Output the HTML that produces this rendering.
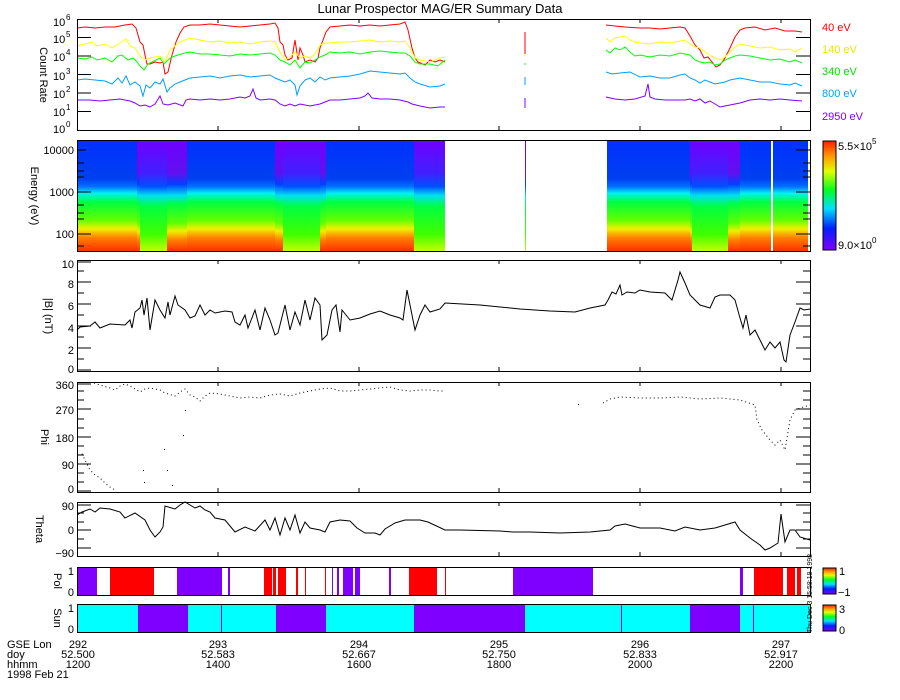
<!DOCTYPE html>
<html><head><meta charset="utf-8"><style>
html,body{margin:0;padding:0;background:#fff;}
svg{display:block;}
text{font-family:"Liberation Sans",sans-serif;font-size:11px;fill:#000;}
</style></head><body>
<svg width="900" height="700" viewBox="0 0 900 700" xmlns="http://www.w3.org/2000/svg">
<defs>
<linearGradient id="cb" x1="0" y1="1" x2="0" y2="0">
<stop offset="0" stop-color="#8000ff"/><stop offset="0.2" stop-color="#0020ff"/><stop offset="0.38" stop-color="#00e0ff"/><stop offset="0.55" stop-color="#00ff20"/><stop offset="0.72" stop-color="#e0ff00"/><stop offset="0.85" stop-color="#ffa000"/><stop offset="1" stop-color="#ff2000"/>
</linearGradient>
<linearGradient id="gN" x1="0" y1="0" x2="0" y2="1">
<stop offset="0" stop-color="#0030ff"/><stop offset="0.35" stop-color="#0040f0"/><stop offset="0.42" stop-color="#0070ff"/><stop offset="0.48" stop-color="#00f0f0"/><stop offset="0.56" stop-color="#00ff40"/><stop offset="0.72" stop-color="#60ff00"/><stop offset="0.8" stop-color="#f0f000"/><stop offset="0.88" stop-color="#ff8000"/><stop offset="1" stop-color="#ff3000"/>
</linearGradient>
<linearGradient id="gP" x1="0" y1="0" x2="0" y2="1">
<stop offset="0" stop-color="#7000ff"/><stop offset="0.3" stop-color="#6010f0"/><stop offset="0.4" stop-color="#0040ff"/><stop offset="0.5" stop-color="#00e0f0"/><stop offset="0.58" stop-color="#00ff40"/><stop offset="0.75" stop-color="#60ff00"/><stop offset="0.82" stop-color="#f0f000"/><stop offset="0.9" stop-color="#ff8000"/><stop offset="1" stop-color="#ff3000"/>
</linearGradient>
<linearGradient id="gL" x1="0" y1="0" x2="0" y2="1">
<stop offset="0" stop-color="#7000ff"/><stop offset="0.3" stop-color="#4020ff"/><stop offset="0.42" stop-color="#0050ff"/><stop offset="0.5" stop-color="#00e0f0"/><stop offset="0.6" stop-color="#00ff40"/><stop offset="0.85" stop-color="#40ff00"/><stop offset="1" stop-color="#c0ff00"/>
</linearGradient>
</defs>

<text x="440" y="13" text-anchor="middle" style="font-size:13px">Lunar Prospector MAG/ER Summary Data</text>

<!-- Panel 1: count rate -->
<g fill="none" stroke-width="1">
<polyline stroke="#ff0000" points="77,28 85,27 95,28 105,27 115,27 125,25 132,24 136,28 140,42 143,45 145,55 147,64 150,64 155,62 160,63 163,62 165,74 168,72 172,55 176,42 180,33 184,27 190,25 200,25 210,24 220,25 230,26 240,27 250,26 260,25 270,24 275,23 278,28 280,42 283,45 285,55 288,60 292,58 295,40 298,60 300,48 303,55 305,62 310,60 315,62 318,58 320,48 323,40 326,32 330,27 340,26 350,25 360,26 370,25 380,26 390,25 400,24 405,22 408,30 412,48 415,58 418,62 425,65 430,60 435,62 440,60 445,62"/>
<polyline stroke="#ffff00" points="77,46 85,44 92,42 97,46 105,44 112,48 120,43 126,39 130,46 135,48 140,56 145,60 150,58 155,57 160,56 165,62 170,50 175,46 180,42 185,40 190,38 200,40 210,42 220,41 230,43 240,42 250,44 260,42 270,41 275,42 280,52 285,60 290,57 295,52 300,58 305,56 310,58 315,54 320,45 325,43 330,43 340,42 350,42 360,41 370,40 380,42 390,41 400,42 405,41 410,48 415,58 420,60 430,62 440,58 445,57"/>
<polyline stroke="#00ff00" points="77,58 85,59 92,57 97,60 105,58 112,62 118,56 122,55 128,60 133,58 137,62 140,66 144,70 148,64 152,62 156,60 160,58 164,64 168,60 172,57 178,55 185,53 190,52 200,54 210,54 220,55 230,56 240,54 250,55 260,54 270,53 275,55 280,60 285,62 290,65 295,60 300,68 305,62 310,63 315,60 320,57 325,55 330,52 340,53 350,52 360,54 370,52 380,51 390,52 400,53 405,53 410,56 415,62 420,64 430,64 438,66 445,60"/>
<polyline stroke="#00a0ff" points="77,80 85,79 95,80 105,81 112,84 118,78 122,83 126,76 130,85 135,82 140,86 143,96 146,85 150,88 155,82 160,84 163,79 167,92 170,88 175,84 180,82 185,80 190,78 200,77 210,76 220,78 230,76 240,75 250,77 260,76 270,75 275,78 280,80 285,82 290,80 295,85 297,95 300,86 305,80 310,78 315,82 320,77 325,80 330,78 340,77 350,76 360,74 370,71 380,72 390,73 400,74 405,73 410,78 415,82 420,84 430,87 440,86 445,84"/>
<polyline stroke="#8000ff" points="77,100 90,100 100,101 110,100 120,99 130,101 135,103 140,106 145,105 150,107 155,104 160,96 163,104 168,105 175,103 183,106 186,100 190,99 200,100 210,99 220,100 230,99 240,97 245,98 250,96 253,89 256,98 260,100 270,99 275,100 280,104 285,106 290,104 295,106 300,104 305,105 310,106 320,104 325,102 330,100 340,100 350,99 360,98 365,96 368,93 372,98 380,99 390,99 400,100 408,102 412,104 420,106 430,108 440,107 445,107"/>
<line x1="525" y1="32" x2="525" y2="54" stroke="#ff0000"/><line x1="525" y1="54" x2="525" y2="56" stroke="#ffff00"/><line x1="525" y1="63" x2="525" y2="65" stroke="#00ff00"/><line x1="525" y1="77" x2="525" y2="85" stroke="#00a0ff"/><line x1="525" y1="98" x2="525" y2="108" stroke="#8000ff"/>
<polyline stroke="#ff0000" points="606,25 615,26 625,27 640,28 650,28 660,29 670,28 680,27 685,28 690,36 695,45 700,50 704,58 708,57 712,62 716,67 720,65 725,58 730,48 735,37 740,30 745,28 755,27 765,30 775,28 785,31 795,31 802,32"/>
<polyline stroke="#ffff00" points="606,38 610,42 615,38 620,37 625,36 630,40 635,42 640,43 650,44 660,42 670,43 680,41 685,40 690,44 695,47 700,48 705,52 710,55 715,58 720,60 725,57 730,52 735,47 740,44 750,46 760,48 770,47 780,50 790,49 795,52 802,48"/>
<polyline stroke="#00ff00" points="606,50 610,53 615,48 620,50 625,47 630,52 635,56 640,55 650,57 660,55 670,56 680,53 690,55 695,60 700,62 705,63 710,62 715,65 720,64 725,60 730,58 735,56 740,55 750,56 760,58 770,60 780,59 790,62 795,60 802,63"/>
<polyline stroke="#00a0ff" points="606,72 612,74 620,73 630,72 640,77 650,76 660,78 670,78 680,75 685,74 690,78 695,80 700,83 705,80 710,82 715,84 720,83 725,82 730,80 735,79 740,78 750,80 760,82 770,82 780,84 790,85 795,83 802,86"/>
<polyline stroke="#8000ff" points="606,97 615,99 625,100 635,99 645,96 648,84 650,97 655,99 665,100 675,100 685,100 690,99 695,101 700,99 705,103 710,101 715,104 720,107 725,106 730,105 740,103 750,100 760,99 770,100 780,99 790,100 802,101"/>
</g>
<rect x="77.5" y="19.5" width="733" height="111" fill="none" stroke="#000"/>
<g stroke="#000">
<line x1="77" y1="37.5" x2="91" y2="37.5"/><line x1="77" y1="56" x2="91" y2="56"/><line x1="77" y1="74.5" x2="91" y2="74.5"/><line x1="77" y1="93" x2="91" y2="93"/><line x1="77" y1="111.5" x2="91" y2="111.5"/>
<line x1="810" y1="37.5" x2="796" y2="37.5"/><line x1="810" y1="56" x2="796" y2="56"/><line x1="810" y1="74.5" x2="796" y2="74.5"/><line x1="810" y1="93" x2="796" y2="93"/><line x1="810" y1="111.5" x2="796" y2="111.5"/>
</g>
<g style="font-size:11px">
<text x="53" y="26">10</text><text x="66" y="20" style="font-size:8px">6</text>
<text x="53" y="43">10</text><text x="66" y="37" style="font-size:8px">5</text>
<text x="53" y="61">10</text><text x="66" y="55" style="font-size:8px">4</text>
<text x="53" y="80">10</text><text x="66" y="74" style="font-size:8px">3</text>
<text x="53" y="98">10</text><text x="66" y="92" style="font-size:8px">2</text>
<text x="53" y="116">10</text><text x="66" y="110" style="font-size:8px">1</text>
<text x="53" y="133">10</text><text x="66" y="127" style="font-size:8px">0</text>
</g>
<text transform="translate(40,75) rotate(90)" text-anchor="middle">Count Rate</text>
<text x="822" y="31" style="fill:#ff0000">40 eV</text>
<text x="822" y="53" style="fill:#e8e800">140 eV</text>
<text x="822" y="75" style="fill:#00e000">340 eV</text>
<text x="822" y="97" style="fill:#00a0ff">800 eV</text>
<text x="822" y="120" style="fill:#8000ff">2950 eV</text>

<!-- Panel 2: spectrogram -->
<rect x="78" y="140" width="60" height="111" fill="url(#gN)"/>
<rect x="137" y="140" width="50" height="111" fill="url(#gP)"/>
<rect x="140" y="140" width="27" height="111" fill="url(#gL)"/>
<rect x="187" y="140" width="89" height="111" fill="url(#gN)"/>
<rect x="275" y="140" width="51" height="111" fill="url(#gP)"/>
<rect x="283" y="140" width="37" height="111" fill="url(#gL)"/>
<rect x="326" y="140" width="89" height="111" fill="url(#gN)"/>
<rect x="414" y="140" width="31" height="111" fill="url(#gL)"/>
<rect x="607" y="140" width="84" height="111" fill="url(#gN)"/>
<rect x="690" y="140" width="50" height="111" fill="url(#gP)"/>
<rect x="692" y="140" width="36" height="111" fill="url(#gL)"/>
<rect x="740" y="140" width="31" height="111" fill="url(#gN)"/>
<rect x="773" y="140" width="35" height="111" fill="url(#gN)"/>
<rect x="525" y="140" width="1" height="111" fill="url(#gL)"/>
<rect x="77.5" y="140.5" width="733" height="111" fill="none" stroke="#000"/>
<g stroke="#000">
<line x1="77" y1="150" x2="86" y2="150"/><line x1="77" y1="192" x2="91" y2="192"/><line x1="77" y1="234" x2="91" y2="234"/>
<line x1="77" y1="163" x2="84" y2="163"/><line x1="77" y1="171" x2="84" y2="171"/><line x1="77" y1="177" x2="84" y2="177"/><line x1="77" y1="205" x2="84" y2="205"/><line x1="77" y1="213" x2="84" y2="213"/><line x1="77" y1="219" x2="84" y2="219"/><line x1="77" y1="246" x2="84" y2="246"/>
<line x1="810" y1="150" x2="796" y2="150"/><line x1="810" y1="192" x2="796" y2="192"/><line x1="810" y1="234" x2="796" y2="234"/>
<line x1="810" y1="163" x2="803" y2="163"/><line x1="810" y1="171" x2="803" y2="171"/><line x1="810" y1="177" x2="803" y2="177"/><line x1="810" y1="205" x2="803" y2="205"/><line x1="810" y1="213" x2="803" y2="213"/><line x1="810" y1="219" x2="803" y2="219"/><line x1="810" y1="246" x2="803" y2="246"/>
</g>
<text x="74" y="154" text-anchor="end">10000</text><text x="74" y="196" text-anchor="end">1000</text><text x="74" y="238" text-anchor="end">100</text>
<text transform="translate(31,196) rotate(90)" text-anchor="middle">Energy (eV)</text>
<rect x="823" y="141" width="13" height="109" fill="url(#cb)" stroke="#000"/>
<text x="838" y="150">5.5×10</text><text x="872" y="144" style="font-size:8px">5</text>
<text x="838" y="249">9.0×10</text><text x="872" y="243" style="font-size:8px">0</text>

<!-- Panel 3: |B| -->
<polyline fill="none" stroke="#000" points="77,330 80,327 90,326 95,322 100,328 110,324 125,325 130,320 132,328 135,312 140,308 142,300 144,315 147,298 150,330 155,300 160,310 165,318 168,302 170,315 175,296 178,305 185,310 190,318 195,316 200,305 205,315 210,310 215,313 225,311 232,312 235,322 240,325 245,315 248,328 255,310 260,330 265,308 270,320 275,335 278,333 285,305 290,330 295,312 300,325 305,300 310,320 315,298 320,305 322,340 327,335 332,310 336,305 340,332 342,310 350,320 360,318 370,314 380,311 390,315 400,318 403,320 407,290 410,305 415,330 420,315 425,305 430,312 440,309 445,303 480,305 520,309 550,311 575,312 590,308 605,305 608,300 612,292 616,294 620,285 622,295 627,292 635,293 640,290 650,292 665,293 672,300 678,280 680,272 685,283 690,295 700,305 710,308 715,297 720,295 730,295 735,300 740,318 743,328 746,315 750,335 755,330 760,340 765,350 770,342 775,348 780,342 784,360 786,362 790,335 795,322 800,308 804,310 810,309"/>
<rect x="77.5" y="260.5" width="733" height="111" fill="none" stroke="#000"/>
<g stroke="#000">
<line x1="77" y1="370" x2="91" y2="370"/><line x1="77" y1="348" x2="91" y2="348"/><line x1="77" y1="326" x2="91" y2="326"/><line x1="77" y1="304" x2="91" y2="304"/><line x1="77" y1="282" x2="91" y2="282"/><line x1="77" y1="262" x2="91" y2="262"/>
<line x1="77" y1="359" x2="84" y2="359"/><line x1="77" y1="337" x2="84" y2="337"/><line x1="77" y1="315" x2="84" y2="315"/><line x1="77" y1="293" x2="84" y2="293"/><line x1="77" y1="271" x2="84" y2="271"/>
<line x1="810" y1="348" x2="796" y2="348"/><line x1="810" y1="326" x2="796" y2="326"/><line x1="810" y1="304" x2="796" y2="304"/><line x1="810" y1="282" x2="796" y2="282"/>
<line x1="810" y1="359" x2="803" y2="359"/><line x1="810" y1="337" x2="803" y2="337"/><line x1="810" y1="315" x2="803" y2="315"/><line x1="810" y1="293" x2="803" y2="293"/><line x1="810" y1="271" x2="803" y2="271"/>
</g>
<text x="74" y="268" text-anchor="end">10</text><text x="74" y="288" text-anchor="end">8</text><text x="74" y="310" text-anchor="end">6</text><text x="74" y="332" text-anchor="end">4</text><text x="74" y="354" text-anchor="end">2</text><text x="74" y="373" text-anchor="end">0</text>
<text transform="translate(45,316) rotate(90)" text-anchor="middle">|B| (nT)</text>

<!-- Panel 4: Phi -->
<g fill="none" stroke="#000" stroke-dasharray="1 3">
<polyline points="78,455 82,454 85,460 90,470 95,475 100,478 105,483 110,487 115,490"/>
<polyline points="94,383 100,385 110,388 115,390 120,386 125,384 130,386 135,389 140,392 145,389 150,388 160,390 165,393 175,396 180,392 185,389 190,395 195,397 200,401 205,396 210,393 220,394 230,396 240,398 250,397 260,398 270,395 280,394 290,396 300,393 310,391 320,389 330,388 340,391 350,391 360,390 370,389 380,388 390,387 400,390 410,391 420,390 430,390 440,391 445,391"/>
<polyline points="603,403 610,399 620,397 640,398 660,398 680,397 700,399 720,398 740,400 755,405 757,420 762,430 770,440 775,445 780,440 785,450 790,420 795,410 800,408 810,405"/>
</g>
<g fill="#000"><rect x="164" y="449" width="1" height="1"/><rect x="167" y="470" width="1" height="1"/><rect x="172" y="485" width="1" height="1"/><rect x="183" y="435" width="1" height="1"/><rect x="185" y="410" width="1" height="1"/><rect x="143" y="470" width="1" height="1"/><rect x="144" y="482" width="1" height="1"/><rect x="578" y="404" width="1" height="1"/></g>
<rect x="77.5" y="382.5" width="733" height="110" fill="none" stroke="#000"/>
<g stroke="#000">
<line x1="77" y1="491" x2="91" y2="491"/><line x1="77" y1="464" x2="91" y2="464"/><line x1="77" y1="437" x2="91" y2="437"/><line x1="77" y1="409" x2="91" y2="409"/><line x1="77" y1="384" x2="91" y2="384"/>
<line x1="77" y1="482" x2="84" y2="482"/><line x1="77" y1="473" x2="84" y2="473"/><line x1="77" y1="455" x2="84" y2="455"/><line x1="77" y1="446" x2="84" y2="446"/><line x1="77" y1="428" x2="84" y2="428"/><line x1="77" y1="419" x2="84" y2="419"/><line x1="77" y1="400" x2="84" y2="400"/><line x1="77" y1="391" x2="84" y2="391"/>
<line x1="810" y1="464" x2="796" y2="464"/><line x1="810" y1="437" x2="796" y2="437"/><line x1="810" y1="409" x2="796" y2="409"/>
<line x1="810" y1="482" x2="803" y2="482"/><line x1="810" y1="473" x2="803" y2="473"/><line x1="810" y1="455" x2="803" y2="455"/><line x1="810" y1="446" x2="803" y2="446"/><line x1="810" y1="428" x2="803" y2="428"/><line x1="810" y1="419" x2="803" y2="419"/><line x1="810" y1="400" x2="803" y2="400"/><line x1="810" y1="391" x2="803" y2="391"/>
</g>
<text x="74" y="389" text-anchor="end">360</text><text x="74" y="414" text-anchor="end">270</text><text x="74" y="442" text-anchor="end">180</text><text x="74" y="469" text-anchor="end">90</text><text x="74" y="493" text-anchor="end">0</text>
<text transform="translate(41,437) rotate(90)" text-anchor="middle">Phi</text>

<!-- Panel 5: Theta -->
<polyline fill="none" stroke="#000" points="77,515 82,512 90,509 95,512 100,508 110,509 120,512 125,518 135,513 145,520 150,530 155,537 160,532 163,527 165,506 175,509 180,505 185,502 195,508 200,506 205,510 210,512 215,518 225,520 235,532 245,527 255,531 265,520 270,530 275,518 280,535 285,518 290,530 295,515 300,533 305,522 310,528 320,530 325,532 330,522 340,520 350,521 357,528 365,533 375,533 380,535 385,529 395,523 405,520 420,520 428,522 445,530 460,530 500,531 513,532 530,532 560,533 590,532 610,530 615,526 625,524 640,528 660,528 675,531 685,527 700,530 715,528 735,522 740,530 750,538 760,545 765,550 770,548 778,543 781,514 785,542 790,530 795,530 800,537 810,540"/>
<rect x="77.5" y="502.5" width="733" height="54" fill="none" stroke="#000"/>
<g stroke="#000">
<line x1="77" y1="505" x2="91" y2="505"/><line x1="77" y1="530" x2="91" y2="530"/><line x1="77" y1="548" x2="91" y2="548"/><line x1="77" y1="513" x2="84" y2="513"/><line x1="77" y1="522" x2="84" y2="522"/><line x1="77" y1="539" x2="84" y2="539"/>
<line x1="810" y1="505" x2="796" y2="505"/><line x1="810" y1="530" x2="796" y2="530"/><line x1="810" y1="548" x2="796" y2="548"/><line x1="810" y1="513" x2="803" y2="513"/><line x1="810" y1="522" x2="803" y2="522"/><line x1="810" y1="539" x2="803" y2="539"/>
</g>
<text x="74" y="510" text-anchor="end">90</text><text x="74" y="534" text-anchor="end">0</text><text x="74" y="557" text-anchor="end">−90</text>
<text transform="translate(36,529) rotate(90)" text-anchor="middle">Theta</text>

<!-- Panel 6: Pol -->
<g fill="#8000ff">
<rect x="78" y="568" width="19" height="27"/><rect x="177" y="568" width="45" height="27"/><rect x="228" y="568" width="2" height="27"/><rect x="332" y="568" width="1" height="27"/><rect x="337" y="568" width="2" height="27"/><rect x="343" y="568" width="10" height="27"/><rect x="355" y="568" width="5" height="27"/><rect x="389" y="568" width="2" height="27"/><rect x="513" y="568" width="80" height="27"/><rect x="740" y="568" width="3" height="27"/>
</g>
<g fill="#ff0000">
<rect x="110" y="568" width="44" height="27"/><rect x="264" y="568" width="8" height="27"/><rect x="273" y="568" width="3" height="27"/><rect x="278" y="568" width="8" height="27"/><rect x="296" y="568" width="2" height="27"/><rect x="305" y="568" width="1" height="27"/><rect x="325" y="568" width="1" height="27"/><rect x="409" y="568" width="28" height="27"/><rect x="445" y="568" width="1" height="27"/><rect x="754" y="568" width="29" height="27"/><rect x="787" y="568" width="8" height="27"/><rect x="797" y="568" width="4" height="27"/>
</g>
<rect x="77.5" y="567.5" width="733" height="28" fill="none" stroke="#000"/>
<text x="74" y="575" text-anchor="end">1</text><text x="74" y="596" text-anchor="end">0</text>
<text transform="translate(54,581) rotate(90)" text-anchor="middle">Pol</text>
<rect x="823" y="568" width="13" height="26" fill="url(#cb)" stroke="#000"/>
<text x="839" y="575">1</text><text x="838" y="596">−1</text>

<!-- Panel 7: Sun -->
<rect x="78" y="605" width="732" height="27" fill="#00ffff"/>
<g fill="#8000ff">
<rect x="138" y="605" width="50" height="27"/><rect x="221" y="605" width="1" height="27"/><rect x="276" y="605" width="50" height="27"/><rect x="414" y="605" width="111" height="27"/><rect x="621" y="605" width="1" height="27"/><rect x="690" y="605" width="50" height="27"/><rect x="753" y="605" width="1" height="27"/>
</g>
<rect x="77.5" y="604.5" width="733" height="28" fill="none" stroke="#000"/>
<text x="74" y="612" text-anchor="end">1</text><text x="74" y="633" text-anchor="end">0</text>
<text transform="translate(54,618) rotate(90)" text-anchor="middle">Sun</text>
<rect x="823" y="605" width="13" height="26" fill="url(#cb)" stroke="#000"/>
<text x="839" y="613">3</text><text x="839" y="634">0</text>
<text transform="translate(812,633) rotate(-90)" style="font-size:7px">Thu Dec 3 15:58:19 1998</text>

<!-- x ticks -->
<g stroke="#000">
<line x1="218" y1="19" x2="218" y2="23"/><line x1="359" y1="19" x2="359" y2="23"/><line x1="499" y1="19" x2="499" y2="23"/><line x1="640" y1="19" x2="640" y2="23"/><line x1="781" y1="19" x2="781" y2="23"/>
<line x1="218" y1="130" x2="218" y2="126"/><line x1="359" y1="130" x2="359" y2="126"/><line x1="499" y1="130" x2="499" y2="126"/><line x1="640" y1="130" x2="640" y2="126"/><line x1="781" y1="130" x2="781" y2="126"/>
<line x1="218" y1="260" x2="218" y2="264"/><line x1="359" y1="260" x2="359" y2="264"/><line x1="499" y1="260" x2="499" y2="264"/><line x1="640" y1="260" x2="640" y2="264"/><line x1="781" y1="260" x2="781" y2="264"/>
<line x1="218" y1="371" x2="218" y2="367"/><line x1="359" y1="371" x2="359" y2="367"/><line x1="499" y1="371" x2="499" y2="367"/><line x1="640" y1="371" x2="640" y2="367"/><line x1="781" y1="371" x2="781" y2="367"/>
<line x1="218" y1="382" x2="218" y2="386"/><line x1="359" y1="382" x2="359" y2="386"/><line x1="499" y1="382" x2="499" y2="386"/><line x1="640" y1="382" x2="640" y2="386"/><line x1="781" y1="382" x2="781" y2="386"/>
<line x1="218" y1="492" x2="218" y2="488"/><line x1="359" y1="492" x2="359" y2="488"/><line x1="499" y1="492" x2="499" y2="488"/><line x1="640" y1="492" x2="640" y2="488"/><line x1="781" y1="492" x2="781" y2="488"/>
<line x1="218" y1="502" x2="218" y2="506"/><line x1="499" y1="502" x2="499" y2="506"/><line x1="640" y1="502" x2="640" y2="506"/><line x1="781" y1="502" x2="781" y2="506"/>
<line x1="218" y1="556" x2="218" y2="552"/><line x1="499" y1="556" x2="499" y2="552"/><line x1="640" y1="556" x2="640" y2="552"/><line x1="781" y1="556" x2="781" y2="552"/>
</g>

<!-- bottom labels -->
<text x="7" y="648">GSE Lon</text><text x="7" y="658">doy</text><text x="7" y="668">hhmm</text><text x="7" y="678">1998 Feb 21</text>
<g text-anchor="middle">
<text x="78" y="648">292</text><text x="78" y="658">52.500</text><text x="78" y="668">1200</text>
<text x="218" y="648">293</text><text x="218" y="658">52.583</text><text x="218" y="668">1400</text>
<text x="359" y="648">294</text><text x="359" y="658">52.667</text><text x="359" y="668">1600</text>
<text x="499" y="648">295</text><text x="499" y="658">52.750</text><text x="499" y="668">1800</text>
<text x="640" y="648">296</text><text x="640" y="658">52.833</text><text x="640" y="668">2000</text>
<text x="781" y="648">297</text><text x="781" y="658">52.917</text><text x="781" y="668">2200</text>
</g>
</svg>
</body></html>
